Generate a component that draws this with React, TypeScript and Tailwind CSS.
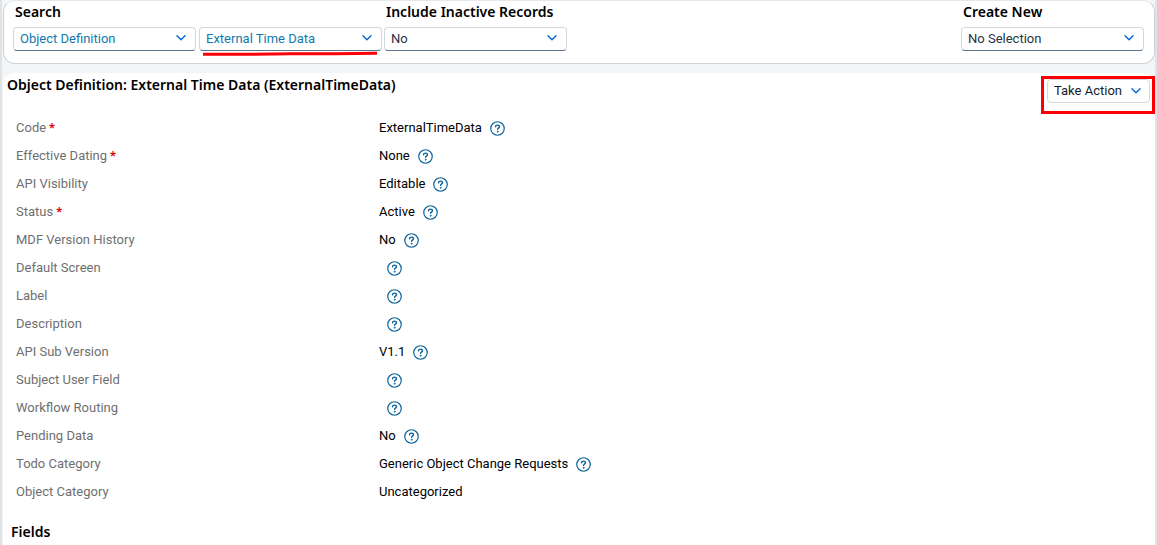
import React from "react";

type Field = {
  label: string;
  value?: string;
  required?: boolean;
  help?: boolean;
};

const fields: Field[] = [
  { label: "Code", value: "ExternalTimeData", required: true, help: true },
  { label: "Effective Dating", value: "None", required: true, help: true },
  { label: "API Visibility", value: "Editable", help: true },
  { label: "Status", value: "Active", required: true, help: true },
  { label: "MDF Version History", value: "No", help: true },
  { label: "Default Screen", help: true },
  { label: "Label", help: true },
  { label: "Description", help: true },
  { label: "API Sub Version", value: "V1.1", help: true },
  { label: "Subject User Field", help: true },
  { label: "Workflow Routing", help: true },
  { label: "Pending Data", value: "No", help: true },
  { label: "Todo Category", value: "Generic Object Change Requests", help: true },
  { label: "Object Category", value: "Uncategorized" },
];

const headingText = "font-['Noto_Sans','Liberation_Sans',sans-serif] text-[14px] leading-5 font-semibold";

function Chevron({ className = "" }: { className?: string }) {
  return (
    <svg
      aria-hidden="true"
      viewBox="0 0 10 6"
      className={`h-1.5 w-2.5 shrink-0 fill-none stroke-[#0064d9] ${className}`}
      strokeWidth="1.4"
      strokeLinecap="round"
      strokeLinejoin="round"
    >
      <path d="M1 .8l4 4 4-4" />
    </svg>
  );
}

function HelpIcon() {
  return (
    <svg
      aria-hidden="true"
      viewBox="0 0 14 14"
      className="size-[15px] fill-none stroke-[#0a6199]"
      strokeWidth="1.1"
      strokeLinecap="round"
      strokeLinejoin="round"
    >
      <circle cx="7" cy="7" r="6.3" />
      <path strokeWidth="1.3" d="M5.2 5.4c0-1 .8-1.6 1.8-1.6s1.8.6 1.8 1.6c0 1.2-1.7 1.2-1.7 2.3" />
      <circle cx="7.1" cy="10" r=".5" className="fill-[#0a6199]" strokeWidth=".6" />
    </svg>
  );
}

type PickerProps = {
  id: string;
  value: string;
  label?: string;
  tone?: string;
  children?: React.ReactNode;
};

function Picker({ id, value, label, tone = "text-[#27343f]", children }: PickerProps) {
  return (
    <div className="relative w-[183px]">
      <select
        id={id}
        aria-label={label}
        className={`block h-6 w-full appearance-none rounded border border-[#d3d8dd] border-b-[#5b738b] bg-white pr-7 pl-1.5 text-[13px] ${tone}`}
      >
        <option>{value}</option>
      </select>
      <Chevron className="pointer-events-none absolute top-2 right-2.5" />
      {children}
    </div>
  );
}

export default function App() {
  return (
    <div className="min-h-screen border-x-2 border-[#dfe2e6] bg-[#f4f5f7] pl-px font-['Roboto','Liberation_Sans',sans-serif] text-[13px] text-black">
      <section className="flex justify-between rounded-xl border border-t-[#e6e9ec] border-[#ccd3d7] bg-white pt-px pr-2.5 pb-3 pl-[9px]">
        <div className="flex gap-0.5">
          <div>
            <label htmlFor="search-type" className={`ml-0.5 block pb-[5px] ${headingText}`}>
              Search
            </label>
            <div className="flex gap-[3px]">
              <Picker id="search-type" value="Object Definition" tone="text-[#107ab0]" />
              <Picker id="search-object" value="External Time Data" label="Object to search" tone="text-[#107ab0]">
                <svg
                  aria-hidden="true"
                  viewBox="0 0 174 5"
                  className="pointer-events-none absolute top-6 left-1 h-[5px] w-[174px] fill-none stroke-[#fb0007]"
                  strokeWidth="3"
                >
                  <path d="M0 3.3h43l44-.5h45L174 2.3" />
                </svg>
              </Picker>
            </div>
          </div>
          <div>
            <label htmlFor="inactive" className={`ml-0.5 block pb-[5px] ${headingText}`}>
              Include Inactive Records
            </label>
            <Picker id="inactive" value="No" />
          </div>
        </div>
        <div>
          <label htmlFor="create" className={`ml-0.5 block pb-[5px] ${headingText}`}>
            Create New
          </label>
          <Picker id="create" value="No Selection" />
        </div>
      </section>

      <main className="mt-[9px] min-h-[472px] rounded-t-xl bg-white pt-0.5">
        <div className="flex items-start justify-between pr-0.5 pl-1">
          <h1 className={headingText}>Object Definition: External Time Data (ExternalTimeData)</h1>
          <div className="relative pt-1 pr-[3px]">
            <button
              type="button"
              className="flex h-6 w-[103px] items-center justify-between rounded border border-[#d3d8dd] bg-white pr-2 pl-1.5 text-[13px] text-[#131e29]"
            >
              Take Action
              <Chevron />
            </button>
            <div className="pointer-events-none absolute top-px -right-0.5 h-[38px] w-[114px] border-3 border-[#fb0007]" />
          </div>
        </div>

        <dl className="mt-[11px]">
          {fields.map((field) => (
            <div key={field.label} className="flex h-7 items-center pl-[13px]">
              <dt className="w-[363px] shrink-0 text-[#6f6f6f]">
                {field.label}
                {field.required && <span className="ml-[3px] font-bold text-[#e00000]">*</span>}
              </dt>
              <dd className="flex items-center gap-2">
                <span>{field.value}</span>
                {field.help && (
                  <button type="button" aria-label={`Help for ${field.label}`} className="mt-px">
                    <HelpIcon />
                  </button>
                )}
              </dd>
            </div>
          ))}
        </dl>

        <h2 className={`mt-4 pl-2 ${headingText}`}>Fields</h2>
      </main>
    </div>
  );
}
